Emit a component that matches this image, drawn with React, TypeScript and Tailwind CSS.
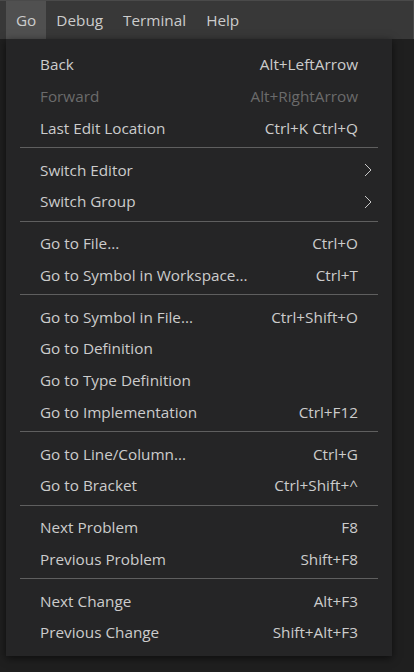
import React from "react";

type Item =
  | { sep: true }
  | { label: string; key?: string; disabled?: boolean; sub?: boolean; sep?: false };

const items: Item[] = [
  { label: "Back", key: "Alt+LeftArrow" },
  { label: "Forward", key: "Alt+RightArrow", disabled: true },
  { label: "Last Edit Location", key: "Ctrl+K Ctrl+Q" },
  { sep: true },
  { label: "Switch Editor", sub: true },
  { label: "Switch Group", sub: true },
  { sep: true },
  { label: "Go to File...", key: "Ctrl+O" },
  { label: "Go to Symbol in Workspace...", key: "Ctrl+T" },
  { sep: true },
  { label: "Go to Symbol in File...", key: "Ctrl+Shift+O" },
  { label: "Go to Definition" },
  { label: "Go to Type Definition" },
  { label: "Go to Implementation", key: "Ctrl+F12" },
  { sep: true },
  { label: "Go to Line/Column...", key: "Ctrl+G" },
  { label: "Go to Bracket", key: "Ctrl+Shift+^" },
  { sep: true },
  { label: "Next Problem", key: "F8" },
  { label: "Previous Problem", key: "Shift+F8" },
  { sep: true },
  { label: "Next Change", key: "Alt+F3" },
  { label: "Previous Change", key: "Shift+Alt+F3" },
];

function Chevron() {
  return (
    <svg width="8" height="14" viewBox="0 0 8 14" fill="none">
      <path d="M1 1 L7 7 L1 13" stroke="#c8c8c8" strokeWidth="1" />
    </svg>
  );
}

export default function App() {
  return (
    <div
      className="w-[414px] h-[672px] bg-[#1f1f1f] flex flex-col overflow-hidden text-[15.3px]"
      style={{ fontFamily: '"Open Sans", "Noto Sans", sans-serif' }}
    >
      <div className="h-[39px] bg-[#383838] border-t border-[#4a4a4a] border-r flex items-stretch pl-[6px] text-[#cccccc] shrink-0">
        <div className="px-[10px] flex items-center bg-[#505050]">Go</div>
        <div className="px-[10px] flex items-center">Debug</div>
        <div className="px-[10px] flex items-center">Terminal</div>
        <div className="px-[10px] flex items-center">Help</div>
      </div>
      <div className="pl-[6px]">
        <div className="w-[386px] bg-[#252526] pt-[10px] pb-[7px] shadow-[0_2px_8px_rgba(0,0,0,0.6)] text-[#cccccc]">
          {items.map((it, i) =>
            it.sep ? (
              <div key={i} className="h-[10px] px-[14px] pt-[3px]">
                <div className="h-px bg-[#5f5f5f]" />
              </div>
            ) : (
              <div
                key={i}
                className={`h-[31.75px] flex items-center pl-[34px] pr-[34px] ${
                  it.disabled ? "text-[#6b6b6b]" : "text-[#cccccc]"
                }`}
              >
                <span className="flex-1 whitespace-nowrap">{it.label}</span>
                {it.key && <span className="whitespace-nowrap">{it.key}</span>}
                {it.sub && (
                  <span className="-mr-[14px]">
                    <Chevron />
                  </span>
                )}
              </div>
            )
          )}
        </div>
      </div>
    </div>
  );
}
